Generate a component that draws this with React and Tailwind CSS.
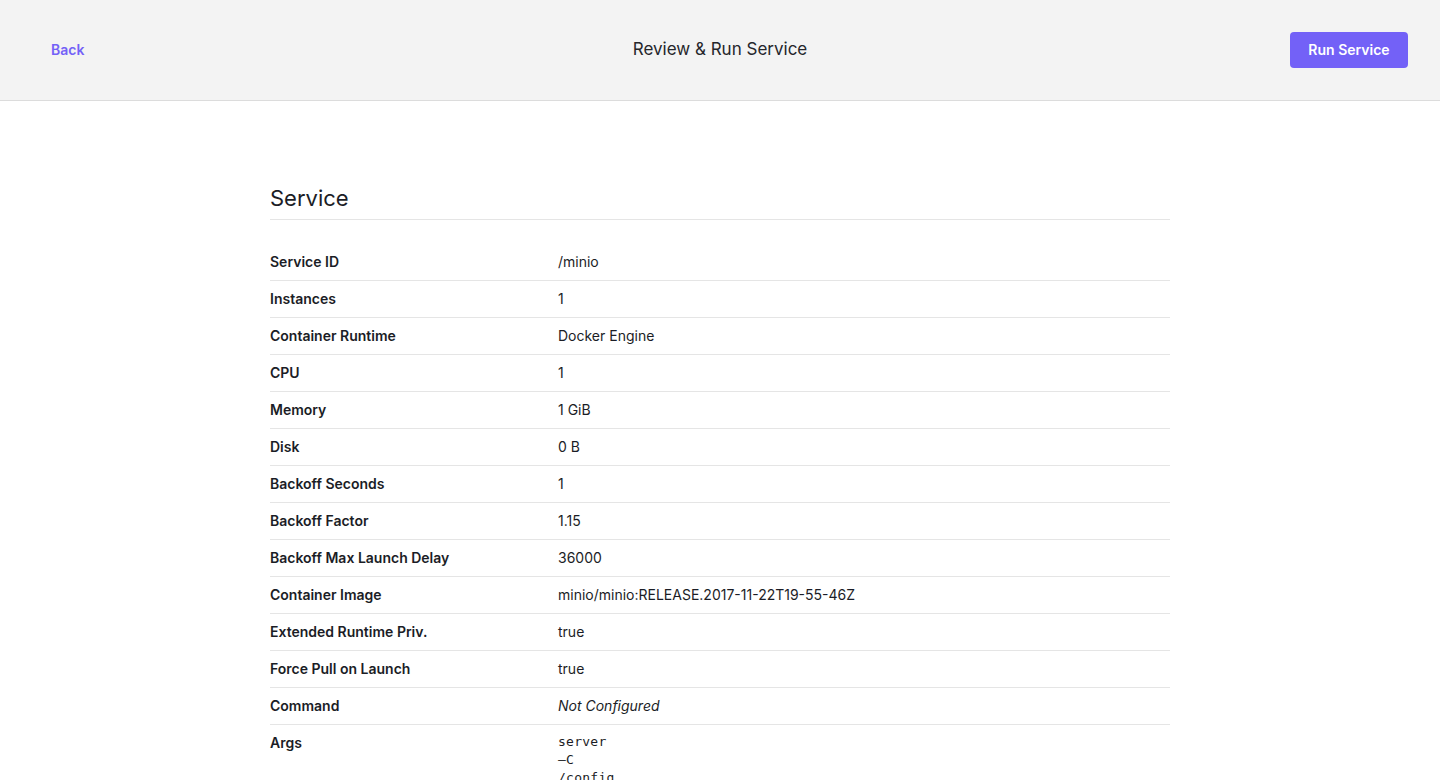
import React from "react";

const rows = [
  ["Service ID", "/minio"],
  ["Instances", "1"],
  ["Container Runtime", "Docker Engine"],
  ["CPU", "1"],
  ["Memory", "1 GiB"],
  ["Disk", "0 B"],
  ["Backoff Seconds", "1"],
  ["Backoff Factor", "1.15"],
  ["Backoff Max Launch Delay", "36000"],
  ["Container Image", "minio/minio:RELEASE.2017-11-22T19-55-46Z"],
  ["Extended Runtime Priv.", "true"],
  ["Force Pull on Launch", "true"],
  ["Command", null, "empty"],
  ["Args", ["server", "-C", "/config", "/export"], "mono"],
];

function Row({ label, value, kind }) {
  let content = value;
  if (kind === "empty") content = <span className="italic">Not Configured</span>;
  if (kind === "mono")
    content = (
      <div className="font-['DejaVu_Sans_Mono',monospace] text-[13px] leading-[18px] tracking-[0.02em]">
        {value.map((v) => (
          <div key={v}>{v === "-C" ? "\u2013C" : v}</div>
        ))}
      </div>
    );
  return (
    <div className="flex border-b border-[#e5e5e5] py-2 text-sm leading-5">
      <div className="w-[288px] shrink-0 font-semibold">{label}</div>
      <div className="flex-1">{content}</div>
    </div>
  );
}

export default function App() {
  return (
    <div className="min-h-screen bg-white font-['Inter',sans-serif] text-[#1b1d26]">
      <header className="h-[101px] bg-[#f3f3f3] border-b border-[#dcdcdc] px-8 flex items-center justify-between">
        <button className="w-[118px] text-left pl-[19px] text-sm font-semibold text-[#7361f7]">
          Back
        </button>
        <h1 className="text-[17px] text-[#25262b]">Review &amp; Run Service</h1>
        <button className="w-[118px] h-9 rounded bg-[#7361f7] text-white text-sm font-semibold">
          Run Service
        </button>
      </header>
      <main className="w-[900px] mx-auto pt-20">
        <h2 className="text-[22px] leading-8 pt-px pb-[5px] border-b border-[#e5e5e5]">Service</h2>
        <div className="mt-6">
          {rows.map(([l, v, k]) => (
            <Row key={l} label={l} value={v} kind={k} />
          ))}
        </div>
      </main>
    </div>
  );
}
